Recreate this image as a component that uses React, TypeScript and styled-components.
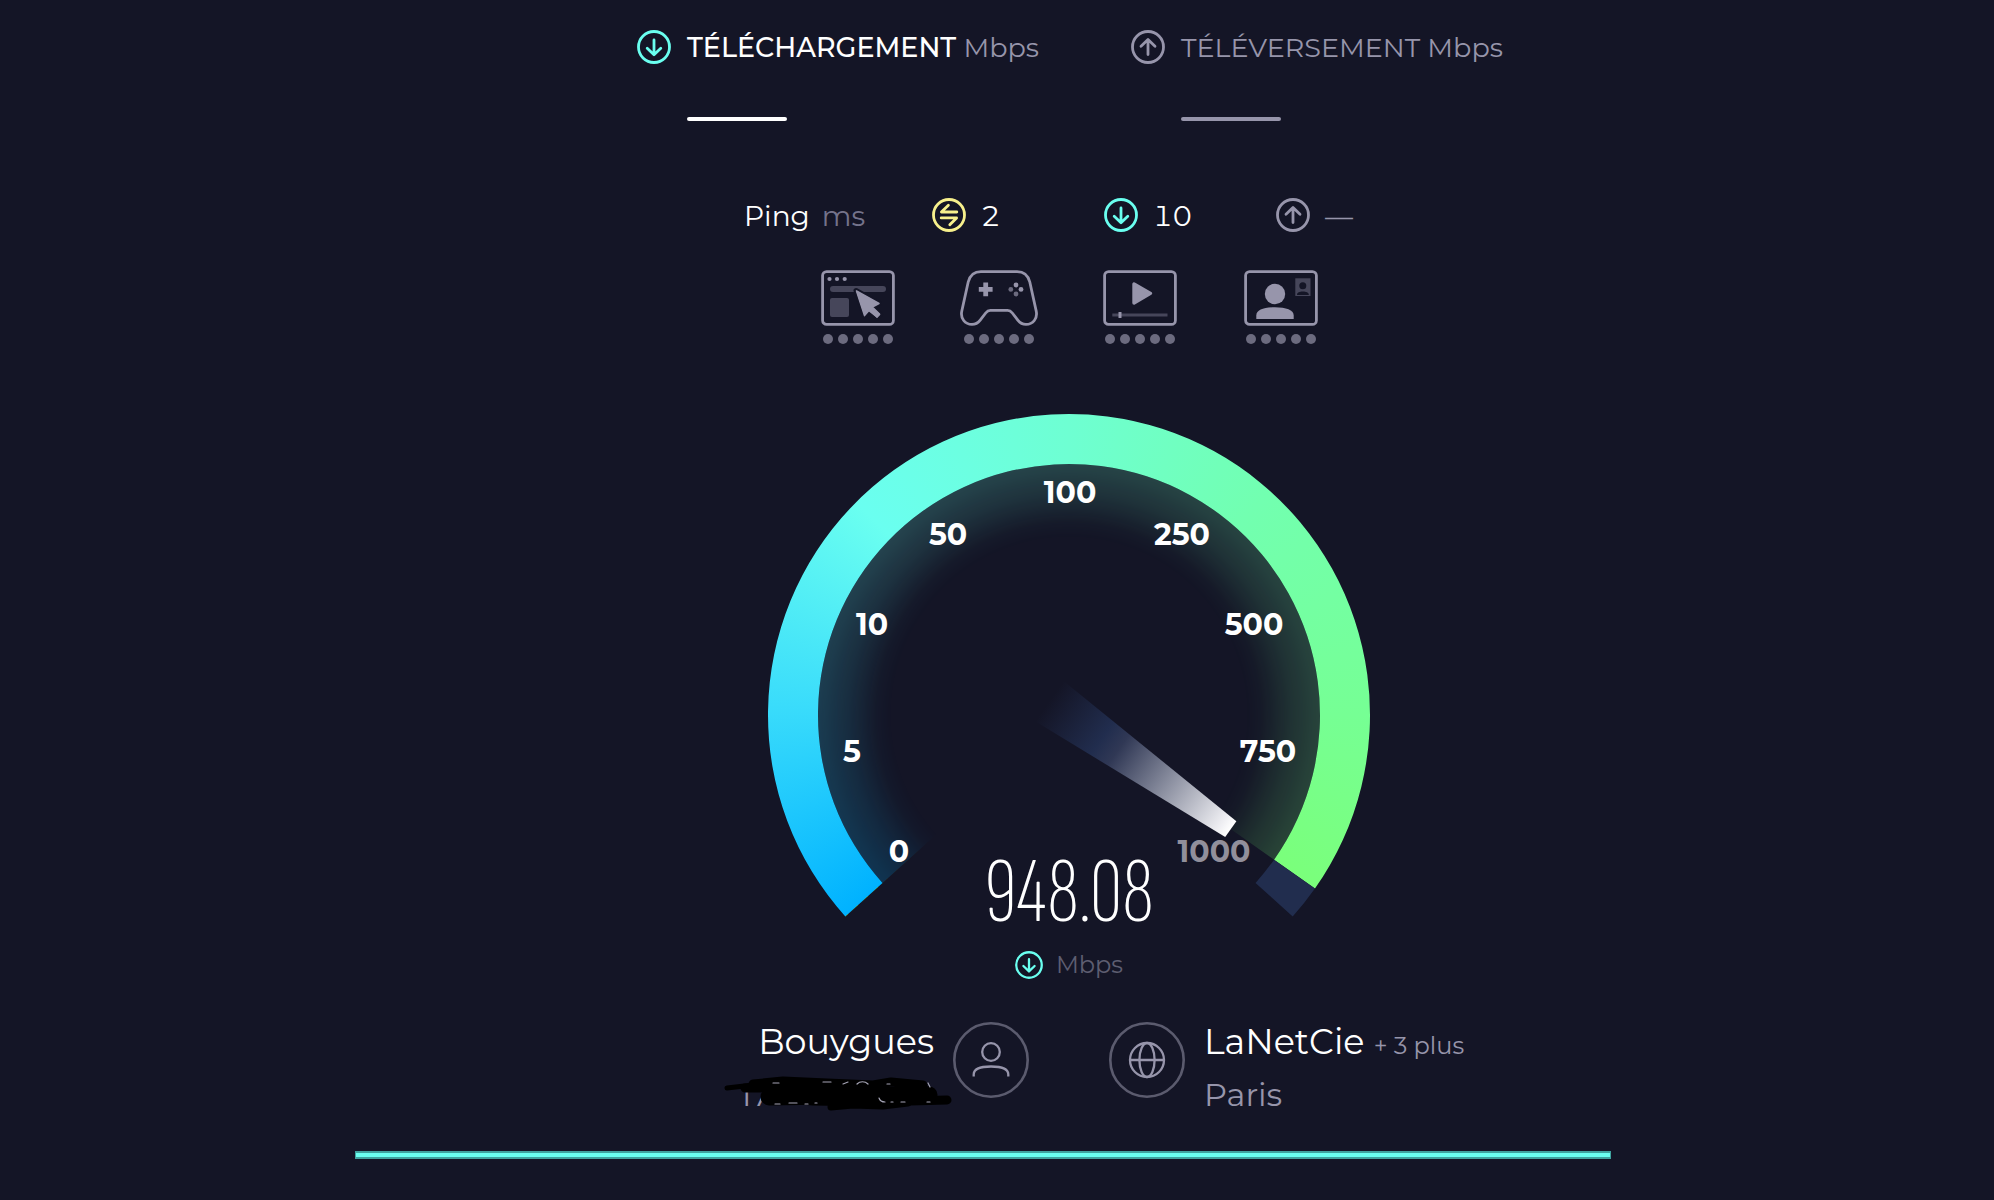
import React from 'react';
import styled, { createGlobalStyle } from 'styled-components';

const c = {
  bg: '#141526',
  white: '#ffffff',
  muted: '#9795ab',
  faint: '#5b5b6e',
  dim: '#46465a',
  cyan: '#6afff0',
  yellow: '#f7f08c',
  track: '#212d4e',
};

const GlobalStyle = createGlobalStyle`
  * { box-sizing: border-box; }
  body {
    margin: 0;
    background: ${c.bg};
    color: ${c.white};
    font-family: Montserrat, Inter, "Liberation Sans", sans-serif;
  }
`;

const Page = styled.main`
  min-height: 100vh;
  background: ${c.bg};
`;

const Content = styled.div`
  display: flex;
  flex-direction: column;
  align-items: center;
  padding: 30px 0 0 144px;
`;

const Results = styled.section`
  display: grid;
  grid-template-columns: 494px 378px;
  padding-left: 8px;
`;

const Result = styled.div`
  display: grid;
  grid-template-columns: 34px auto;
  column-gap: 16px;
  row-gap: 51px;
  justify-content: start;
`;

const ResultTitle = styled.h2<{ $active?: boolean }>`
  margin: 0;
  font-size: 27px;
  line-height: 36px;
  font-weight: ${p => (p.$active ? 500 : 400)};
  color: ${p => (p.$active ? c.white : c.muted)};
  white-space: nowrap;
`;

const Unit = styled.span`
  font-weight: 400;
  color: ${c.muted};
`;

const Pending = styled.div<{ $active?: boolean }>`
  grid-column: 2;
  width: 100px;
  height: 4px;
  border-radius: 2px;
  background: ${p => (p.$active ? c.white : c.muted)};
`;

const PingRow = styled.section`
  display: grid;
  grid-template-columns: 188px 172px 172px 118px;
  margin-top: 77px;
  font-size: 28px;
  line-height: 36px;
  font-variant-numeric: tabular-nums;
`;

const PingLabel = styled.div`
  display: flex;
  gap: 12px;
`;

const PingUnit = styled.span`
  color: #74738b;
`;

const PingValue = styled.div<{ $muted?: boolean }>`
  display: flex;
  gap: 15px;
  color: ${p => (p.$muted ? c.muted : c.white)};
`;

const Experiences = styled.section`
  display: flex;
  gap: 61px;
  margin-top: 34px;
`;

const Experience = styled.div`
  display: flex;
  flex-direction: column;
  align-items: center;
  gap: 6px;
`;

const Dots = styled.div`
  display: flex;
  gap: 5px;
`;

const Dot = styled.i`
  width: 10px;
  height: 10px;
  border-radius: 50%;
  background: #6c6b7f;
`;

const Gauge = styled.section`
  position: relative;
  width: 602px;
  margin-top: 70px;
  padding-top: 444px;
  display: flex;
  flex-direction: column;
  align-items: center;
`;

const sweepColors = `conic-gradient(
  from 228deg,
  #00b2ff 0deg,
  #3adcfb 44deg,
  #6afff0 87deg,
  #6effd2 132deg,
  #72ffb0 174deg,
  #76ff94 222deg,
  #7bff76 264deg
)`;

const Arc = styled.div`
  position: absolute;
  top: 0;
  left: 0;
  width: 602px;
  height: 602px;
  background: ${sweepColors};
`;

const Ring = styled(Arc)<{ $shape: string }>`
  clip-path: path('${p => p.$shape}');
`;

const Glow = styled(Arc)<{ $shape: string }>`
  clip-path: path('${p => p.$shape}');
  opacity: 0.2;
  mask-image: radial-gradient(
    circle at center,
    transparent 176px,
    rgba(0, 0, 0, 0.12) 192px,
    rgba(0, 0, 0, 0.6) 220px,
    #000 250px
  );
`;

const Dial = styled.svg`
  position: absolute;
  top: 0;
  left: 0;
`;

const Tick = styled.text<{ $muted?: boolean }>`
  font-size: 30px;
  font-weight: 700;
  text-anchor: middle;
  fill: ${p => (p.$muted ? '#918f9b' : c.white)};
`;

const Speed = styled.output`
  position: relative;
  font-family: "Sofia Sans Extra Condensed", "Roboto Condensed", Roboto, sans-serif;
  font-size: 92px;
  line-height: 72px;
  font-weight: 200;
`;

const SpeedUnit = styled.div`
  position: relative;
  display: flex;
  align-items: center;
  gap: 13px;
  margin-top: 21px;
  font-size: 24px;
  line-height: 28px;
  color: #5e5e71;
`;

const Parties = styled.footer`
  display: grid;
  grid-template-columns: 355px 355px;
  column-gap: 80px;
  margin-top: 43px;
`;

const Party = styled.div<{ $end?: boolean }>`
  display: flex;
  gap: 19px;
  justify-content: ${p => (p.$end ? 'flex-end' : 'flex-start')};
`;

const PartyText = styled.div<{ $end?: boolean }>`
  text-align: ${p => (p.$end ? 'right' : 'left')};
  white-space: nowrap;
`;

const PartyName = styled.div`
  font-size: 35px;
  line-height: 40px;
`;

const More = styled.a`
  font-size: 24px;
  line-height: 1;
  color: ${c.muted};
  text-decoration: none;
`;

const PartyDetail = styled.div`
  margin-top: 12px;
  font-size: 32px;
  line-height: 42px;
  color: ${c.muted};
`;

const Hidden = styled(PartyDetail)`
  position: relative;
  width: 194px;
  margin-left: auto;
  text-align: left;
`;

const Scribble = styled.svg`
  position: absolute;
  left: -17px;
  top: 0;
`;

const Progress = styled.div`
  width: 63%;
  height: 8px;
  margin: 35px 0 0 17.8%;
  border: solid #3fa39f;
  border-width: 2px 1px;
  background: ${c.cyan};
`;

const PictureBox = styled.svg`
  flex-shrink: 0;
`;

type IconProps = { color: string; size?: number };

const Round = ({ color, size = 34, d, label }: IconProps & { d: string; label: string }) => (
  <PictureBox width={size} height={size} viewBox="-17 -17 34 34" fill="none" stroke={color} strokeWidth="2.8" role="img" aria-label={label}>
    <circle r="15.5" />
    <path d={d} strokeLinecap="round" strokeLinejoin="round" />
  </PictureBox>
);
const Down = (p: IconProps) => <Round {...p} label="Téléchargement" d="M0 -7V7.5M-6.8 1.2L0 7.8L6.8 1.2" />;
const Up = (p: IconProps) => <Round {...p} label="Téléversement" d="M0 7.5V-7M-7 -0.8L0 -7.6L7 -0.8" />;
const Idle = (p: IconProps) => <Round {...p} label="Inactif" d="M7.8 -3H-7.6L-0.6 -9.8M-7.8 2.9H7.6L0.8 9.8" />;

const Frame = () => <rect x="4.6" y="3.6" width="70.8" height="52.8" rx="4" fill="none" stroke={c.muted} strokeWidth="2.8" />;

const Web = () => (
  <svg width="80" height="60">
    <Frame />
    <g fill={c.muted}><circle cx="11.5" cy="11" r="2.1" /><circle cx="19" cy="11" r="2.1" /><circle cx="26.7" cy="11" r="2.1" /></g>
    <rect x="12" y="18" width="56" height="6" rx="3" fill={c.dim} />
    <rect x="12" y="30" width="19" height="19" rx="2" fill={c.dim} />
    <path d="M38 22.5L61.5 35.5L54.3 39L62.5 46.4L59 50L51 42.6L46.5 48.2Z" fill={c.muted} stroke={c.bg} strokeWidth="5" strokeLinejoin="round" paintOrder="stroke" />
    <path d="M38.5 23L61 35.5L54.3 39L61.5 46L59 49L51 42.6L46.5 47.6Z" fill={c.muted} stroke={c.muted} strokeWidth="1.5" strokeLinejoin="round" />
  </svg>
);

const Game = () => (
  <svg width="80" height="60">
    <path
      d="M22 3.6H58C65 3.6 69 7 70.8 14L77.2 43C78.8 50.5 74 56.4 67 56.4C63.5 56.4 61 55 59 52.4L53.3 45C51.8 43 50.8 42.3 48.6 42.3H31.4C29.2 42.3 28.2 43 26.7 45L21 52.4C19 55 16.5 56.4 13 56.4C6 56.4 1.2 50.5 2.8 43L9.2 14C11 7 15 3.6 22 3.6Z"
      fill="none" stroke={c.muted} strokeWidth="2.8"
    />
    <path d="M26.7 14.5V28.3M19.8 21.4H33.6" stroke={c.muted} strokeWidth="4.8" />
    <g fill={c.muted}><circle cx="57" cy="17" r="2.4" /><circle cx="62" cy="21.4" r="2.4" /></g>
    <g fill="#6c6b7f"><circle cx="51.8" cy="21.4" r="2.4" /><circle cx="57" cy="26" r="2.4" /></g>
  </svg>
);

const Video = () => (
  <svg width="80" height="60">
    <Frame />
    <path d="M34 16V35L50.5 25.4Z" fill={c.muted} stroke={c.muted} strokeWidth="3.4" strokeLinejoin="round" />
    <path d="M12.3 47H67.5" stroke={c.dim} strokeWidth="3" />
    <path d="M20 44V50" stroke={c.muted} strokeWidth="3" />
  </svg>
);

const Call = () => (
  <svg width="80" height="60">
    <Frame />
    <circle cx="34" cy="26" r="10.2" fill={c.muted} />
    <path d="M15.3 51V47.5C15.3 42 23 39.3 34 39.3S52.7 42 52.7 47.5V51Z" fill={c.muted} />
    <rect x="54.3" y="10.3" width="15.2" height="17.7" fill={c.dim} />
    <circle cx="61.8" cy="17.8" r="3.5" fill={c.bg} />
    <path d="M56 27C56 24.6 58.6 23.6 61.8 23.6S67.8 24.6 67.8 27Z" fill={c.bg} />
  </svg>
);

const Badge = ({ children }: { children: React.ReactNode }) => (
  <PictureBox width="76" height="76" viewBox="-38 -38 76 76" fill="none" stroke={c.muted} strokeWidth="2.3">
    <circle r="36.7" stroke={c.faint} strokeWidth="2.6" />
    {children}
  </PictureBox>
);

const CENTER = 301;
const OUTER = 301;
const INNER = 251;
const START = 138;
const END = 402;
const VALUE = 395.2;

const at = (deg: number, r: number) => {
  const a = (deg * Math.PI) / 180;
  return `${(CENTER + r * Math.cos(a)).toFixed(2)} ${(CENTER + r * Math.sin(a)).toFixed(2)}`;
};
const band = (from: number, to: number) => {
  const large = to - from > 180 ? 1 : 0;
  return `M${at(from, OUTER)}A${OUTER} ${OUTER} 0 ${large} 1 ${at(to, OUTER)}L${at(to, INNER)}A${INNER} ${INNER} 0 ${large} 0 ${at(from, INNER)}Z`;
};
const sector = (from: number, to: number) =>
  `M${CENTER} ${CENTER}L${at(from, INNER)}A${INNER} ${INNER} 0 1 1 ${at(to, INNER)}Z`;

const ticks = [
  { v: '0', x: 131, y: 448 },
  { v: '5', x: 84, y: 348 },
  { v: '10', x: 104, y: 221 },
  { v: '50', x: 180, y: 131 },
  { v: '100', x: 302, y: 89 },
  { v: '250', x: 414, y: 131 },
  { v: '500', x: 486, y: 221 },
  { v: '750', x: 500, y: 348 },
  { v: '1000', x: 446, y: 448, muted: true },
];

const experiences = [Web, Game, Video, Call];

export default function App() {
  return (
    <Page>
      <GlobalStyle />
      <Content>
        <Results>
          <Result>
            <Down color={c.cyan} />
            <ResultTitle $active>TÉLÉCHARGEMENT <Unit>Mbps</Unit></ResultTitle>
            <Pending $active />
          </Result>
          <Result>
            <Up color={c.muted} />
            <ResultTitle>TÉLÉVERSEMENT <Unit>Mbps</Unit></ResultTitle>
            <Pending />
          </Result>
        </Results>

        <PingRow>
          <PingLabel><span>Ping</span><PingUnit>ms</PingUnit></PingLabel>
          <PingValue><Idle color={c.yellow} />2</PingValue>
          <PingValue><Down color={c.cyan} />10</PingValue>
          <PingValue $muted><Up color={c.muted} />—</PingValue>
        </PingRow>

        <Experiences>
          {experiences.map((Picture, i) => (
            <Experience key={i}>
              <Picture />
              <Dots><Dot /><Dot /><Dot /><Dot /><Dot /></Dots>
            </Experience>
          ))}
        </Experiences>

        <Gauge>
          <Glow $shape={sector(START, VALUE)} />
          <Ring $shape={band(START, VALUE)} />
          <Dial width="602" height="602">
            <defs>
              <linearGradient id="needle" gradientUnits="userSpaceOnUse" x1="-24" y1="0" x2="198" y2="0">
                <stop offset="0" stopColor={c.track} stopOpacity="0" />
                <stop offset="0.29" stopColor={c.track} />
                <stop offset="0.38" stopColor="#303855" />
                <stop offset="0.95" stopColor="#eeeef2" />
                <stop offset="1" stopColor="#ffffff" />
              </linearGradient>
            </defs>
            <path d={band(VALUE, END)} fill={c.track} />
            {ticks.map(t => <Tick key={t.v} x={t.x} y={t.y} $muted={t.muted}>{t.v}</Tick>)}
            <path d="M-24 -24.6L198 -9.7V9.7L-24 24.6Z" fill="url(#needle)" transform={`translate(${CENTER} ${CENTER}) rotate(${VALUE - 360})`} />
          </Dial>
          <Speed>948.08</Speed>
          <SpeedUnit><Down color={c.cyan} size={28} />Mbps</SpeedUnit>
        </Gauge>

        <Parties>
          <Party $end>
            <PartyText $end>
              <PartyName>Bouygues</PartyName>
              <Hidden>
                17
                <Scribble width="234" height="42" fill="none" stroke="#000" strokeLinecap="round" strokeLinejoin="round">
                  <path d="M4 14L30 11L60 12L104 11" strokeWidth="5" />
                  <path d="M30 10L60 7L104 9L150 11L168 8L200 11" strokeWidth="9" />
                  <path d="M22 14L80 14L120 18L206 17" strokeWidth="9" />
                  <path d="M46 23L110 22L160 24L206 21" strokeWidth="17" />
                  <path d="M54 24L90 27L150 28L224 26" strokeWidth="9" />
                  <path d="M108 33L130 31L160 32L185 29" strokeWidth="7" />
                  <path d="M50 9h6M100 8h8M120 10l5-2M134 10c3-3 8-3 11 0M164 10h3M205 9l2 4M52 30h5M66 29h8M82 30h3M92 29h2M156 24c1 3 3 4 6 4M168 28h2M178 28h4M204 28h3" stroke="#a5a4b5" strokeWidth="1.2" />
                </Scribble>
              </Hidden>
            </PartyText>
            <Badge>
              <circle cy="-8" r="8.8" />
              <path d="M-17.3 16.5V14.5C-17.3 9 -12 6.5 0 6.5S17.3 9 17.3 14.5V16.5" />
            </Badge>
          </Party>
          <Party>
            <Badge>
              <circle r="17" />
              <ellipse rx="7.6" ry="17" />
              <path d="M-17 0H17" />
            </Badge>
            <PartyText>
              <PartyName>LaNetCie <More href="#servers">+ 3 plus</More></PartyName>
              <PartyDetail>Paris</PartyDetail>
            </PartyText>
          </Party>
        </Parties>
      </Content>
      <Progress role="progressbar" aria-label="Progression du test" />
    </Page>
  );
}
